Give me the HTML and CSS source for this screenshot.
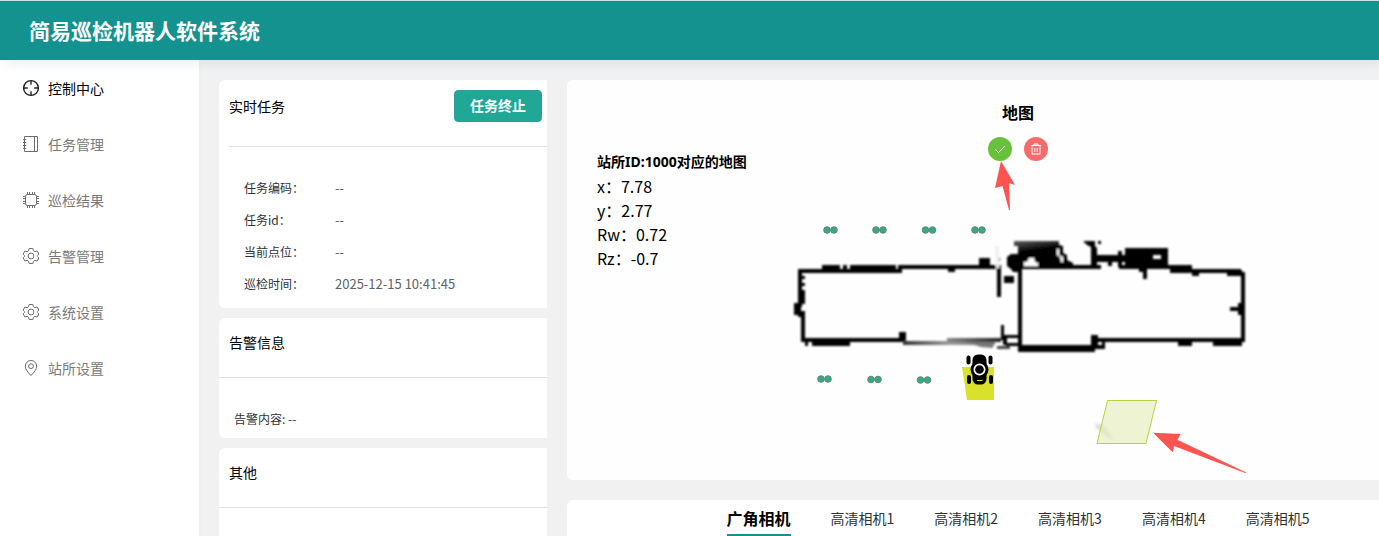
FILE: index.html
```
<!DOCTYPE html>
<html lang="zh-CN">
<head>
  <meta charset="UTF-8">
  <title>简易巡检机器人软件系统</title>
  <link rel="stylesheet" href="styles.css">
</head>
<body>
  <header class="header">
    <h1>简易巡检机器人软件系统</h1>
  </header>
  <div class="layout">
    <nav class="sidebar">
      <a class="menu-item active" href="#">
        <svg viewBox="0 0 18 18"><circle cx="9" cy="9" r="7.4"/><path d="M9 1.6v4.2M9 12.2v4.2M1.6 9h4.2M12.2 9h4.2"/></svg>
        <span>控制中心</span>
      </a>
      <a class="menu-item" href="#">
        <svg viewBox="0 0 18 18"><path d="M2.500 1.500h13v15h-13zM12.500 1.500v15M1 4.500h3.200M1 7.500h3.200M1 10.500h3.200M1 13.500h3.200"/></svg>
        <span>任务管理</span>
      </a>
      <a class="menu-item" href="#">
        <svg viewBox="0 0 18 18"><rect x="3.5" y="3.5" width="11" height="11" rx="2"/><path d="M5.5 1v2.5M7.5 1v2.5M10.5 1v2.5M12.5 1v2.5M5.5 14.5V17M7.5 14.5V17M10.5 14.5V17M12.5 14.5V17M1 5.5h2.5M1 7.5h2.5M1 10.5h2.5M1 12.5h2.5M14.5 5.5H17M14.5 7.5H17M14.5 10.5H17M14.5 12.5H17"/></svg>
        <span>巡检结果</span>
      </a>
      <a class="menu-item" href="#">
        <svg viewBox="0 0 18 18"><path d="M7.2 1.5h3.6l.6 2.2 1.5.9 2.2-.6 1.8 3.1-1.6 1.6v.6l1.6 1.6-1.8 3.1-2.2-.6-1.5.9-.6 2.2H7.2l-.6-2.2-1.5-.9-2.2.6-1.8-3.1 1.6-1.6v-.6L1.1 7.1 2.9 4l2.2.6 1.5-.9z"/><circle cx="9" cy="9" r="2.9"/></svg>
        <span>告警管理</span>
      </a>
      <a class="menu-item" href="#">
        <svg viewBox="0 0 18 18"><path d="M7.2 1.5h3.6l.6 2.2 1.5.9 2.2-.6 1.8 3.1-1.6 1.6v.6l1.6 1.6-1.8 3.1-2.2-.6-1.5.9-.6 2.2H7.2l-.6-2.2-1.5-.9-2.2.6-1.8-3.1 1.6-1.6v-.6L1.1 7.1 2.9 4l2.2.6 1.5-.9z"/><circle cx="9" cy="9" r="2.9"/></svg>
        <span>系统设置</span>
      </a>
      <a class="menu-item" href="#">
        <svg viewBox="0 0 18 18"><path d="M9 16.5C5.5 13 3.3 10.3 3.3 7.2a5.700 5.700 0 0 1 11.400 0c0 3.100-2.200 5.800-5.700 9.300z"/><circle cx="9" cy="7.2" r="2.4"/></svg>
        <span>站所设置</span>
      </a>
    </nav>

    <main class="content">
      <div class="left">
        <section class="card task">
          <div class="task-head">
            <h2>实时任务</h2>
            <button class="stop-btn" type="button">任务终止</button>
          </div>
          <dl class="task-list">
            <dt>任务编码：</dt><dd>--</dd>
            <dt>任务id：</dt><dd>--</dd>
            <dt>当前点位：</dt><dd>--</dd>
            <dt>巡检时间：</dt><dd>2025-12-15 10:41:45</dd>
          </dl>
        </section>
        <section class="card">
          <h2 class="card-head">告警信息</h2>
          <p class="alarm">告警内容: --</p>
        </section>
        <section class="card other">
          <h2 class="card-head">其他</h2>
        </section>
      </div>

      <div class="right">
        <section class="map-panel">
          <svg class="map" viewBox="567 80 812 400" preserveAspectRatio="xMinYMin meet">
            <defs>
              <filter id="soft" x="-5%" y="-10%" width="110%" height="120%"><feGaussianBlur stdDeviation="0.8"/></filter>
              <filter id="smear" x="-50%" y="-50%" width="200%" height="200%"><feGaussianBlur stdDeviation="1.5"/></filter>
              <linearGradient id="fadeLine"><stop offset="0" stop-color="#333"/><stop offset="0.5" stop-color="#999"/><stop offset="1" stop-color="#777"/></linearGradient>
              <linearGradient id="fadeWedge"><stop offset="0" stop-color="#888"/><stop offset="1" stop-color="#222"/></linearGradient>
              <linearGradient id="fadeTop" x1="0" y1="0" x2="0.3" y2="1"><stop offset="0" stop-color="#666"/><stop offset="0.4" stop-color="#000"/></linearGradient>
            </defs>

            <g filter="url(#soft)">
              <!-- left room -->
              <path d="M798 269h104v4H798zM822 265h18v5h-18zM843 265h4v5h-4zM850 265h46v6h-46zM898 265h102v4H898zM898 265h4v7h-4zM948 268h7v4h-7zM979 258h11v8h-11zM997 258h3v3h-3zM997 265h4v32h-4z"/>
              <path d="M798 269h4v38h-4zM800 276h5v3h-5zM800 283h5v3h-5zM798 290h7v14h-7zM794 303h7v12h-7zM798 311h6v6h-6zM801 311h4v31h-4zM802 338h104v4H802zM805 341h3v5h-3zM812 340h38v6h-38zM899 332h7v10h-7z"/>
              <path d="M903 341h92v4h-92z" fill="url(#fadeLine)"/>
              <path d="M947 338h54v4h-54z" fill="url(#fadeWedge)"/>
              <path d="M965 342h28v6l-12-1z" fill="#777"/>
              <path d="M1001 325h3v15h-3zM1003 335h16v3h-16zM1003 335h4v10h-4zM1006 343h12v3h-12z"/>
              <path d="M997 346h13v3h-13z" fill="#444"/>
              <path d="M1004 276h10v7h-10z"/>
              <!-- right room -->
              <path d="M1018 268h4v82h-4zM1012 265h89v4h-89zM1018 345h77v7h-77zM1091 335h7v14h-7zM1095 345h10v4h-10zM1102 340h3v8h-3zM1095 338h149v4H1095zM1178 340h14v6h-14zM1213 340h29v6h-29zM1241 272h4v70h-4zM1238 303h4v12h-4zM1230 307h10v4h-10zM1170 269h71v4h-71zM1192 271h7v5h-7zM1227 270h15v6h-15zM1119 265h73v4h-73zM1171 266h21v6h-21zM1139 267h8v5h-8zM1143 267h4v12h-4z"/>
              <path d="M1125 248h43v18h-43zM1153 255v4h8v-4z" fill-rule="evenodd"/>
              <path d="M1093 255h33v7h-33zM1118 251h4v16h-4zM1108 262h4v4h-4zM1125 262h3v5h-3zM1083 241h12v5l2 2v18h-6v-19l-4-2zM1098 241h3v3h-3z"/>
              <path d="M1014 241h45v4l4 1v7l4 2v5l6 3v5h-55v4h-5l-2-3-4-3v-9l4-3h7v-8h-4z" fill="url(#fadeTop)"/>
              <path d="M1024 266v-4h3l2-4h5l1 4 3 1v3zM1057 249h2v6l4 2v5h-2l-1-5-3-2z" fill="#fff"/>
              <path d="M995 246h4v22h-3z" fill="#f0f0f0"/>
            </g>
            <path d="M1095 423l10 3 9 14-8-4-10-8z" fill="#ddd" filter="url(#smear)"/>

            <!-- inspection points -->
            <g class="points">
              <circle cx="827" cy="230" r="3.3"/><circle cx="834" cy="230" r="3.3"/>
              <circle cx="876" cy="230" r="3.3"/><circle cx="883" cy="230" r="3.3"/>
              <circle cx="925.5" cy="230" r="3.3"/><circle cx="932.5" cy="230" r="3.3"/>
              <circle cx="975" cy="230" r="3.3"/><circle cx="982" cy="230" r="3.3"/>
              <circle cx="821" cy="379" r="3.3"/><circle cx="828" cy="379" r="3.3"/>
              <circle cx="871" cy="379.5" r="3.3"/><circle cx="878" cy="379.5" r="3.3"/>
              <circle cx="920.5" cy="380" r="3.3"/><circle cx="927.5" cy="380" r="3.3"/>
            </g>

            <!-- robot -->
            <path d="M962 367h32v33h-27z" fill="#dbe02b"/>
            <rect x="966.5" y="355.5" width="4" height="9" rx="2"/>
            <rect x="988.5" y="355.5" width="4" height="9" rx="2"/>
            <rect x="967" y="375" width="4" height="9" rx="2"/>
            <rect x="989" y="375" width="4" height="9" rx="2"/>
            <rect x="972.5" y="354.5" width="14" height="30" rx="5.5"/>
            <circle cx="979.5" cy="369.5" r="9"/>
            <circle cx="979.5" cy="369.5" r="5.2" fill="none" stroke="#fff" stroke-width="1.7"/>
            <path d="M977 380.5h5.5" stroke="#dbe02b"/>

            <path d="M1107.5 400.500h49l-10.500 43h-49z" fill="#e4ecbb" fill-opacity="0.65" stroke="#b9d23c"/>

            <path class="arrow" d="M1001 161l14 24-6-2 1 27h-1l-6.500-24-7.500 2z"/>
            <path class="arrow" d="M1153 432.700l27.700 1.300-3.400 5.700 69 32.800-.5.700L1174 446l-1.300 6.300z"/>
          </svg>

          <div class="pose">
            <strong>站所ID:1000对应的地图</strong>
            <span>x：7.78</span>
            <span>y：2.77</span>
            <span>Rw：0.72</span>
            <span>Rz：-0.7</span>
          </div>
          <div class="map-head">
            <h2>地图</h2>
            <div class="map-tools">
              <button class="round ok" type="button" aria-label="确定">
                <svg viewBox="0 0 12 12"><path d="M1.500 6.500l3 3 6.500-6.500"/></svg>
              </button>
              <button class="round del" type="button" aria-label="删除">
                <svg viewBox="0 0 12 12"><path d="M1 2.500h10M4 2.500v-1.500h4v1.500M2 2.500v8.500h8v-8.500M4.800 5v4M7.200 5v4"/></svg>
              </button>
            </div>
          </div>
        </section>

        <section class="camera">
          <div class="tabs">
            <a class="tab active" href="#">广角相机</a>
            <a class="tab" href="#">高清相机1</a>
            <a class="tab" href="#">高清相机2</a>
            <a class="tab" href="#">高清相机3</a>
            <a class="tab" href="#">高清相机4</a>
            <a class="tab" href="#">高清相机5</a>
          </div>
        </section>
      </div>
    </main>
  </div>
</body>
</html>
```

FILE: styles.css
```
* { box-sizing: border-box; }
html, body { height: 100%; }
body { margin: 0; display: flex; flex-direction: column; background: #f1f1f1; color: #000; font-family: "Noto Sans CJK SC", sans-serif; font-size: 14px; }
h1, h2, p, dl, dd { margin: 0; }
a { text-decoration: none; color: inherit; }

.header { position: relative; z-index: 2; flex: none; display: flex; align-items: center; height: 60px; padding: 0 29px 2px; background: #139290; border-top: 1px solid #d5dedd; box-shadow: 6px 2px 12px rgba(40, 70, 110, 0.12); }
.header h1 { font-size: 21px; line-height: 30px; color: #fff; }

.layout { flex: 1; display: flex; min-height: 0; }
.sidebar { flex: none; width: 199px; background: #fff; box-shadow: 0 0 4px rgba(0, 0, 0, 0.04); }
.menu-item { display: flex; align-items: center; gap: 8px; height: 56px; padding-left: 22px; color: #7a7a7a; }
.menu-item svg { width: 18px; height: 18px; fill: none; stroke: #6c6c6c; }
.menu-item.active { color: #000; }
.menu-item.active svg { stroke: #222; stroke-width: 1.4; }

.content { flex: 1; display: flex; gap: 20px; min-width: 0; padding: 20px 0 0 20px; }
.left { flex: none; display: flex; flex-direction: column; gap: 10px; width: 328px; }
.right { flex: 1; display: flex; flex-direction: column; gap: 20px; min-width: 0; }

.card { background: #fff; border-radius: 6px 0 0 6px; }
.card h2 { font-size: 14px; font-weight: normal; }
.task { padding: 0 0 8px 10px; }
.task-head { display: flex; align-items: flex-start; justify-content: space-between; height: 67px; padding: 10px 5px 0 0; border-bottom: 1px solid #dcdfe6; }
.task-head h2 { line-height: 32px; }
.stop-btn { width: 88px; height: 32px; padding: 0 0 2px; border: 1px solid #2a9fa8; border-radius: 4px; background: #20a795; color: #fff; font: bold 14px "Noto Sans CJK SC", sans-serif; }
.task-list { display: grid; grid-template-columns: 91px 1fr; padding: 25px 0 0 15px; font-size: 12px; line-height: 32px; color: #303133; }
.task-list dd { font-size: 13px; color: #606266; }
.card-head { height: 60px; padding-left: 10px; line-height: 48px; border-bottom: 1px solid #dcdfe6; }
.alarm { padding: 25px 15px 3px; font-size: 12px; line-height: 32px; color: #303133; }
.other { flex: 1; border-bottom-left-radius: 0; }

.map-panel { position: relative; flex: none; display: flex; height: 400px; padding: 20px 30px; background: #fefefe; border-radius: 6px 0 0 6px; }
.map { position: absolute; left: 0; top: 0; width: 812px; height: 400px; }
.points circle { fill: #2fae85; stroke: #6f7f7a; }
.arrow { fill: #fd5450; }
.pose { position: relative; flex: none; display: flex; flex-direction: column; width: 391px; margin-top: 50px; font-size: 16px; line-height: 24px; }
.pose strong { height: 24px; font-family: "Noto Sans", "Noto Sans CJK SC", sans-serif; font-size: 14px; }
.map-head { position: relative; text-align: center; }
.map-head h2 { font-size: 16px; line-height: 24px; }
.map-tools { display: flex; gap: 12px; margin-top: 13px; }
.round { display: flex; align-items: center; justify-content: center; width: 24px; height: 24px; padding: 0; border: 0; border-radius: 50%; }
.round svg { width: 12px; height: 12px; fill: none; stroke: #fff; }
.ok { background: #67c23a; }
.del { background: #f56c6c; }

.camera { flex: 1; background: #fff; border-radius: 6px 0 0 0; }
.tabs { display: flex; justify-content: center; gap: 40px; padding-left: 90px; }
.tab { height: 36px; line-height: 36px; color: #303133; white-space: nowrap; }
.tab.active { font-size: 16px; font-weight: bold; color: #000; border-bottom: 2px solid #139290; }
```
